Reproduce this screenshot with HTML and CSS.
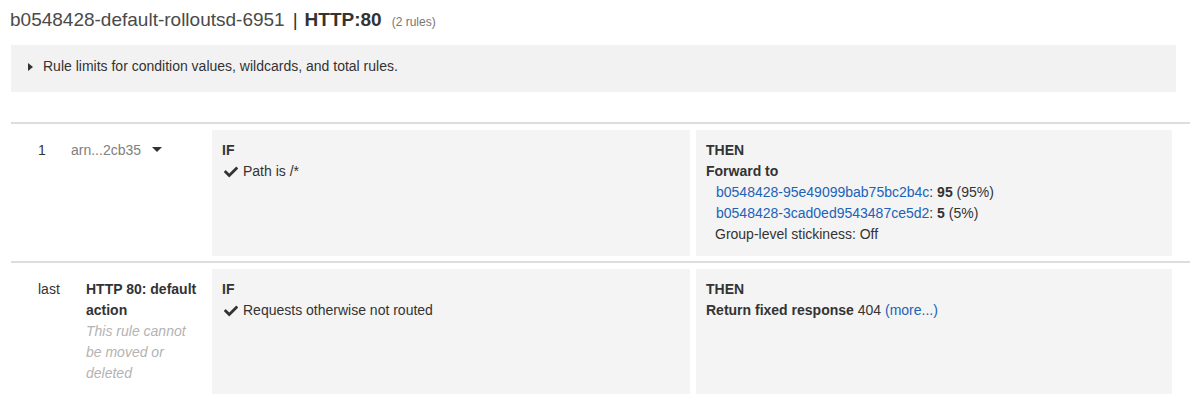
FILE: index.html
```html
<!DOCTYPE html>
<html lang="en">
<head>
<meta charset="utf-8">
<title>Listener rules</title>
<link rel="stylesheet" href="styles.css">
</head>
<body>
<div class="page">
  <h1 class="title"><span class="lb-name">b0548428-default-rolloutsd-6951</span><span class="sep">|</span><span class="port">HTTP:80</span><span class="count">(2 rules)</span></h1>

  <div class="info-box">
    <span class="tri-right"></span>
    <span class="info-text">Rule limits for condition values, wildcards, and total rules.</span>
  </div>

  <div class="rules">
    <div class="rule rule-first">
      <div class="rule-left">
        <div class="rule-num num-short">1</div>
        <div class="rule-arn">arn...2cb35<span class="caret-down"></span></div>
      </div>
      <div class="panel">
        <div class="panel-head">IF</div>
        <div class="cond">
          <svg class="check" viewBox="0 0 512 512"><path d="M173.898 439.404l-166.4-166.4c-9.997-9.997-9.997-26.206 0-36.204l36.203-36.204c9.997-9.998 26.207-9.998 36.204 0L192 312.69 432.095 72.596c9.997-9.997 26.207-9.997 36.204 0l36.203 36.204c9.997 9.997 9.997 26.206 0 36.204l-294.4 294.401c-9.998 9.997-26.207 9.997-36.204-.001z"/></svg>
          <span>Path is /*</span>
        </div>
      </div>
      <div class="panel panel-tall">
        <div class="panel-head">THEN</div>
        <div class="action-title">Forward to</div>
        <div class="target"><a class="link">b0548428-95e49099bab75bc2b4c</a>: <b>95</b> (95%)</div>
        <div class="target"><a class="link">b0548428-3cad0ed9543487ce5d2</a>: <b>5</b> (5%)</div>
        <div class="sticky">Group-level stickiness: Off</div>
      </div>
    </div>

    <div class="rule">
      <div class="rule-left">
        <div class="rule-num num-wide">last</div>
        <div class="rule-name">
          <div class="name-bold">HTTP 80: default action</div>
          <div class="name-note">This rule cannot be moved or deleted</div>
        </div>
      </div>
      <div class="panel">
        <div class="panel-head">IF</div>
        <div class="cond">
          <svg class="check" viewBox="0 0 512 512"><path d="M173.898 439.404l-166.4-166.4c-9.997-9.997-9.997-26.206 0-36.204l36.203-36.204c9.997-9.998 26.207-9.998 36.204 0L192 312.69 432.095 72.596c9.997-9.997 26.207-9.997 36.204 0l36.203 36.204c9.997 9.997 9.997 26.206 0 36.204l-294.4 294.401c-9.998 9.997-26.207 9.997-36.204-.001z"/></svg>
          <span>Requests otherwise not routed</span>
        </div>
      </div>
      <div class="panel">
        <div class="panel-head">THEN</div>
        <div class="action-line"><b>Return fixed response</b> 404 <a class="link">(more...)</a></div>
      </div>
    </div>
  </div>
</div>
</body>
</html>
```

FILE: styles.css
```css
html, body {
  margin: 0;
  padding: 0;
  background: #ffffff;
}

body {
  font-family: "Liberation Sans", Arial, Helvetica, sans-serif;
  font-size: 14px;
  line-height: 21px;
  color: #333333;
}

.page {
  width: 1179px;
  padding: 8px 0 0 11px;
}

.title {
  margin: 0 0 0 -1px;
  font-size: 19px;
  line-height: 24px;
  height: 24px;
  font-weight: normal;
  color: #4a4a4a;
  display: flex;
  align-items: baseline;
}

.sep {
  margin: 0 7px 0 8px;
  color: #333333;
}

.port {
  font-weight: bold;
  color: #333333;
}

.count {
  font-size: 12px;
  line-height: 14px;
  color: #777777;
  margin-left: 10px;
}

.info-box {
  margin-top: 13px;
  width: 1148px;
  height: 21px;
  padding: 11px 0 15px 17px;
  background: #f2f2f2;
  display: flex;
  align-items: center;
  gap: 10px;
  color: #333333;
}

.tri-right {
  width: 0;
  height: 0;
  border-top: 4px solid transparent;
  border-bottom: 4px solid transparent;
  border-left: 5px solid #333333;
}

.rules {
  margin-top: 30px;
}

.rule {
  border-top: 2px solid #dddddd;
  padding: 6px 0 5px;
  display: grid;
  grid-template-columns: 195px 478px 476px;
  column-gap: 6px;
}

.rule-left {
  display: flex;
  padding: 10px 0 10px 27px;
}

.rule-num {
  flex: none;
}

.num-short {
  width: 33px;
}

.num-wide {
  width: 48px;
}

.rule-arn {
  color: #808080;
  display: flex;
  align-items: center;
  height: 21px;
}

.caret-down {
  display: inline-block;
  width: 0;
  height: 0;
  border-left: 5px solid transparent;
  border-right: 5px solid transparent;
  border-top: 5px solid #333333;
  margin-left: 11px;
  margin-top: -3px;
}

.rule-name {
  width: 114px;
}

.name-bold {
  font-weight: bold;
  color: #333333;
}

.name-note {
  font-style: italic;
  color: #b3b3b3;
}

.panel {
  background: #f4f4f4;
  padding: 10px 10px 10px 10px;
}

.panel-tall {
  padding-bottom: 11px;
}

.panel-head {
  font-weight: bold;
  color: #333333;
}

.cond {
  display: flex;
  align-items: center;
  padding-left: 2px;
}

.check {
  width: 14px;
  height: 14px;
  fill: #333333;
  margin-right: 5px;
}

.action-title {
  font-weight: bold;
}

.target {
  padding-left: 10px;
}

.sticky {
  padding-left: 9px;
}

.link {
  color: #2162b8;
  text-decoration: none;
  cursor: pointer;
}

.target b,
.action-line b {
  color: #333333;
}
```
